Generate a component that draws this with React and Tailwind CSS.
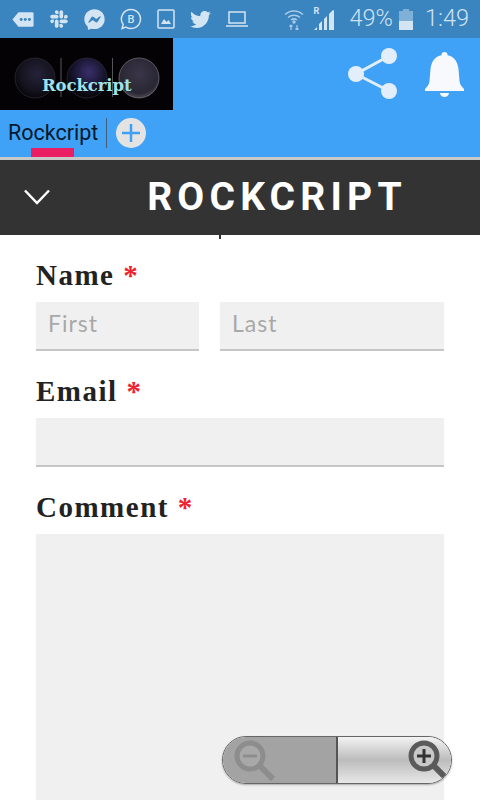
import React from "react";
import { FaTwitter, FaFacebookMessenger, FaSlack } from "react-icons/fa";

const StatusIcons = () => (
  <div className="flex items-center gap-[15px] pl-[12px]">
    <svg width="22" height="17" viewBox="0 0 24 18" fill="#d3e4f2">
      <path d="M7 1h15a1.500 1.500 0 0 1 1.500 1.500v13A1.500 1.500 0 0 1 22 17H7L0.500 9z" />
      <circle cx="10" cy="9" r="1.600" fill="#3a84bf" />
      <circle cx="14.500" cy="9" r="1.600" fill="#3a84bf" />
      <circle cx="19" cy="9" r="1.600" fill="#3a84bf" />
    </svg>
    <FaSlack size={20} color="#d3e4f2" />
    <FaFacebookMessenger size={21} color="#d3e4f2" />
    <svg width="22" height="22" viewBox="0 0 22 22" fill="none" stroke="#d3e4f2" strokeWidth="1.500">
      <path d="M11 1.500a9.500 9.500 0 1 1-5 17.600l-4 1.400 1.200-4A9.500 9.500 0 0 1 11 1.500z" />
      <text x="11" y="15" textAnchor="middle" fontSize="11" fontFamily="Roboto, sans-serif" fontWeight="500" fill="#d3e4f2" stroke="none">B</text>
    </svg>
    <svg width="18" height="20" viewBox="0 0 18 20" fill="none" stroke="#d3e4f2" strokeWidth="1.500">
      <rect x="1" y="1" width="16" height="18" rx="1" />
      <path d="M4 15l3-5 2.500 3 2-2 2.500 4z" fill="#d3e4f2" stroke="none" />
    </svg>
    <FaTwitter size={21} color="#d3e4f2" />
    <svg width="22" height="18" viewBox="0 0 22 18" fill="none" stroke="#d3e4f2" strokeWidth="1.500">
      <rect x="3" y="2" width="16" height="11" />
      <path d="M0 16h22" />
    </svg>
  </div>
);

const StatusRight = () => (
  <div className="flex items-center pr-[11px]">
    <svg width="20" height="22" viewBox="0 0 20 22" fill="none" stroke="#a9cbe6" strokeWidth="1.500">
      <path d="M1 6.500a13 13 0 0 1 18 0M4 9.500a9 9 0 0 1 12 0M7 12a5 5 0 0 1 6 0" />
      <circle cx="10" cy="14" r="1" fill="#a9cbe6" />
      <path d="M7 22v-5M5.500 18.500L7 17l1.500 1.500M13 17v5M11.500 20.500L13 22l1.500-1.500" strokeWidth="1.200" />
    </svg>
    <div className="relative ml-[10px] w-[22px] h-[22px]">
      <span className="absolute left-0 top-[-3px] text-[9px] font-bold leading-[12px] text-[#d3e4f2] font-['Roboto',sans-serif]">R</span>
      <svg width="22" height="22" viewBox="0 0 22 22" fill="#d3e4f2">
        <path d="M0 22l3-3v3zM5 22v-6l3-3v9zM10 22v-11l3-3v14zM15 22v-16l4-4q1 0 1 1v19z" />
      </svg>
    </div>
    <span className="ml-[14px] text-[23.500px] leading-none text-[#cfe2f1] font-['Roboto',sans-serif] font-light">49%</span>
    <div className="ml-[6px] flex flex-col items-center w-[14px] h-[21px]">
      <div className="w-[6px] h-[2px] bg-[#7fb0d8]" />
      <div className="w-[14px] h-[10px] bg-[#7fb0d8]" />
      <div className="w-[14px] h-[9px] bg-[#d3e4f2]" />
    </div>
    <span className="ml-[12px] text-[23.500px] leading-none text-[#cfe2f1] font-['Roboto',sans-serif] font-light">1:49</span>
  </div>
);

const Logo = () => (
  <div className="relative w-[173px] h-[72px] bg-[#040204] overflow-hidden">
    <svg className="absolute inset-0" width="173" height="72" viewBox="0 0 173 72">
      <defs>
        <radialGradient id="planet" cx="55%" cy="40%" r="60%">
          <stop offset="0%" stopColor="#26233a" />
          <stop offset="70%" stopColor="#14131e" />
          <stop offset="100%" stopColor="#08070c" />
        </radialGradient>
        <radialGradient id="planet2" cx="55%" cy="35%" r="60%">
          <stop offset="0%" stopColor="#3a2f6a" />
          <stop offset="70%" stopColor="#15132a" />
          <stop offset="100%" stopColor="#08070c" />
        </radialGradient>
        <radialGradient id="planet3" cx="50%" cy="40%" r="60%">
          <stop offset="0%" stopColor="#3a3648" />
          <stop offset="80%" stopColor="#2a2734" />
          <stop offset="100%" stopColor="#4a4852" />
        </radialGradient>
      </defs>
      <circle cx="35" cy="40" r="20" fill="url(#planet)" stroke="#34323e" strokeWidth="0.600" />
      <circle cx="87" cy="40" r="20" fill="url(#planet2)" stroke="#34323e" strokeWidth="0.600" />
      <circle cx="139" cy="40" r="20" fill="url(#planet3)" stroke="#6a6872" strokeWidth="0.800" />
      <path d="M61 20v39M112.500 20v39" stroke="#6b6b70" strokeWidth="0.800" />
    </svg>
    <span className="absolute left-[42px] top-[36px] text-[16.500px] leading-[24px] font-bold tracking-[-0.1px] text-[#9fe3ea] font-['DejaVu_Serif',serif]">Rockcript</span>
  </div>
);

const Label = ({ children }) => (
  <div className="text-[29px] leading-[32px] font-bold tracking-[1.5px] text-[#222] font-['Liberation_Serif',serif]">
    {children} <span className="text-[#f0232f]">*</span>
  </div>
);

const Field = ({ placeholder, className }) => (
  <div className={`h-[49px] bg-[#f0f0f0] border-b-2 border-[#c6c6c6] pl-[12px] text-[23px] leading-[42px] tracking-[1px] text-[#a8a8a8] font-['Lato',sans-serif] ${className}`}>
    {placeholder}
  </div>
);

const App = () => {
  return (
    <div className="relative w-[480px] h-[800px] overflow-hidden bg-white">
      {/* status bar */}
      <div className="h-[38px] bg-[#3a84bf] flex items-center justify-between">
        <StatusIcons />
        <StatusRight />
      </div>

      {/* app header */}
      <div className="h-[119px] bg-[#3fa2f6] flex flex-col">
        <div className="h-[72px] flex justify-between">
          <Logo />
          <div className="flex items-start pt-[10px] pr-[16px] gap-[27px]">
            <svg width="50" height="52" viewBox="0 0 50 52" fill="#e2effb">
              <circle cx="41" cy="8" r="8" />
              <circle cx="8" cy="26" r="8" />
              <circle cx="41" cy="43" r="8" />
              <path d="M41 8L8 26l33 17" fill="none" stroke="#e2effb" strokeWidth="3" />
            </svg>
            <svg className="mt-[4px]" width="39" height="45" viewBox="0 0 39 45" fill="#f7f9fc">
              <circle cx="19.500" cy="3" r="3" />
              <path d="M19.500 3c9 0 13 6 14 14l1 12c.5 4 2 5 4.500 8v2H0v-2c2.500-3 4-4 4.500-8l1-12c1-8 5-14 14-14z" />
              <path d="M15 41h9a4.500 4 0 0 1-9 0z" />
            </svg>
          </div>
        </div>
        <div className="relative h-[47px] flex items-start pl-[8px]">
          <span className="mt-[6px] text-[21.500px] leading-[34px] text-[#06182c] font-['Roboto',sans-serif]">Rockcript</span>
          <div className="ml-[8px] mt-[8px] w-[1px] h-[30px] bg-[#44607a]" />
          <div className="ml-[9px] mt-[8px] w-[30px] h-[30px] rounded-full bg-[#e3e3e3] flex items-center justify-center">
            <svg width="20" height="20" viewBox="0 0 20 20" stroke="#3f9ff2" strokeWidth="2.500">
              <path d="M10 1v18M1 10h18" />
            </svg>
          </div>
          <div className="absolute left-[31px] bottom-0 w-[43px] h-[9px] bg-[#e91e63]" />
        </div>
      </div>
      <div className="h-[3px] bg-[#c8c8c8]" />

      {/* dark title bar */}
      <div className="relative h-[75px] bg-[#333] flex items-center justify-center">
        <svg className="absolute left-[24px] top-[29px]" width="26" height="16" viewBox="0 0 26 16" fill="none" stroke="#fff" strokeWidth="2.500">
          <path d="M1 1.500L13 14 25 1.500" />
        </svg>
        <span className="ml-[74px] mb-[1px] text-[39px] leading-none font-bold tracking-[5.200px] text-white font-['Roboto',sans-serif]">ROCKCRIPT</span>
      </div>

      {/* form */}
      <div className="relative px-[36px]">
        <div className="absolute left-[219px] top-0 w-[2px] h-[4px] bg-[#333]" />
        <div className="pt-[24px] w-[408px]">
          <Label>Name</Label>
          <div className="mt-[11px] flex gap-[21px]">
            <Field placeholder="First" className="w-[163px]" />
            <Field placeholder="Last" className="w-[224px]" />
          </div>
          <div className="mt-[24px]"><Label>Email</Label></div>
          <Field className="mt-[11px]" />
          <div className="mt-[24px]"><Label>Comment</Label></div>
          <div className="mt-[11px] h-[300px] bg-[#f0f0f0]" />
        </div>
      </div>

      {/* zoom control */}
      <div className="absolute left-[222px] top-[736px] w-[230px] h-[48px] rounded-full border border-[#666] overflow-hidden flex shadow-[0_1px_2px_rgba(0,0,0,0.3)]">
        <div className="w-[115px] bg-[#a3a3a3] border-r-2 border-[#555] pl-[10px] flex items-center">
          <svg width="44" height="42" viewBox="0 0 44 42" fill="none">
            <circle cx="17" cy="17" r="13" stroke="#8d8d8d" strokeWidth="5" fill="#a8a8a8" />
            <path d="M10 17h14" stroke="#8d8d8d" strokeWidth="3" />
            <path d="M27 27l13 13" stroke="#8d8d8d" strokeWidth="6" />
          </svg>
        </div>
        <div className="flex-1 bg-gradient-to-b from-[#f3f3f3] via-[#bcbcbc] to-[#e8e8e8] flex items-center justify-end">
          <svg width="44" height="42" viewBox="0 0 44 42" fill="none">
            <circle cx="17" cy="17" r="13" stroke="#5a5a5a" strokeWidth="5" fill="#c8c8c8" />
            <path d="M10 17h14M17 10v14" stroke="#333" strokeWidth="3" />
            <path d="M27 27l13 13" stroke="#5a5a5a" strokeWidth="6" />
          </svg>
        </div>
      </div>
    </div>
  );
};

export default App;
